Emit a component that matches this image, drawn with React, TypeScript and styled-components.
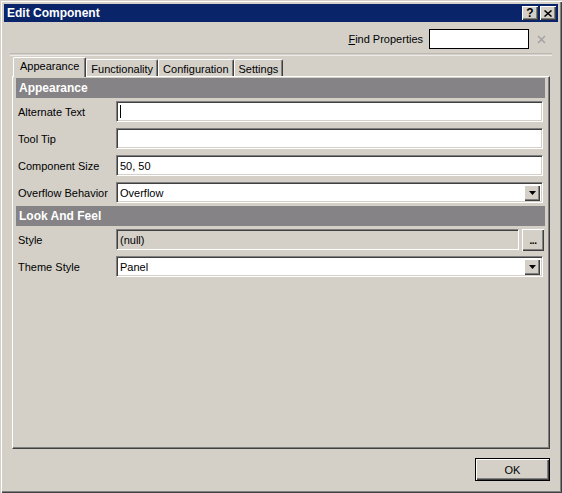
import React from 'react';
import styled, { createGlobalStyle } from 'styled-components';

const FACE = '#d4d0c8';
const SHADOW = '#808080';
const DARK = '#404040';

const GlobalStyle = createGlobalStyle`
  html, body {
    margin: 0;
    padding: 0;
    background: ${FACE};
  }
  body {
    font-family: 'Liberation Sans', Arial, sans-serif;
    font-size: 11px;
    color: #000;
  }
`;

const Window = styled.div`
  width: 562px;
  height: 493px;
  box-sizing: border-box;
  padding: 4px;
  background: ${FACE};
  display: flex;
  flex-direction: column;
  box-shadow: inset 1px 1px ${FACE}, inset 2px 2px #fff, inset -1px -1px ${DARK},
    inset -2px -2px ${SHADOW};
`;

const TitleBar = styled.div`
  height: 18px;
  background: #0a246a;
  display: flex;
  align-items: center;
  padding: 0 2px 0 2px;
  flex-shrink: 0;
`;

const Title = styled.div`
  flex: 1;
  color: #fff;
  font-weight: bold;
  font-size: 12px;
  padding-left: 1px;
`;

const raised = `
  background: ${FACE};
  box-shadow: inset 1px 1px #fff, inset -1px -1px ${DARK}, inset -2px -2px ${SHADOW};
`;

const CaptionButton = styled.div<{ $gap?: boolean }>`
  width: 16px;
  height: 14px;
  box-sizing: border-box;
  ${raised}
  display: flex;
  align-items: center;
  justify-content: center;
  margin-left: ${p => (p.$gap ? 2 : 0)}px;
  font-weight: bold;
  font-size: 12px;
  line-height: 1;
`;

const Body = styled.div`
  flex: 1;
  display: flex;
  flex-direction: column;
  padding: 0 8px 8px 8px;
`;

const FindRow = styled.div`
  margin-top: 7px;
  height: 20px;
  display: flex;
  align-items: center;
  justify-content: flex-end;
  gap: 6px;
  padding-right: 4px;
`;

const FindInput = styled.div`
  width: 100px;
  height: 20px;
  box-sizing: border-box;
  border: 1px solid #000;
  background: #fff;
`;

const ClearButton = styled.div`
  width: 9px;
  height: 9px;
  margin-left: 2px;
  display: flex;
`;

const Separator = styled.div`
  margin: 4px -2px 0 -2px;
  height: 1px;
  border-top: 1px solid #bdb9b1;
  border-bottom: 1px solid #ecebe7;
`;

const TabStrip = styled.div`
  margin-top: 1px;
  height: 19px;
  display: flex;
  align-items: flex-end;
  padding-left: 1px;
  position: relative;
  z-index: 1;
`;

const Tab = styled.div<{ $active?: boolean }>`
  box-sizing: border-box;
  height: ${p => (p.$active ? 20 : 17)}px;
  margin-bottom: ${p => (p.$active ? -1 : 0)}px;
  padding: ${p => (p.$active ? '2px 6px 0 6px' : '2px 4px 0 4px')};
  background: ${FACE};
  border-left: 1px solid #fff;
  border-top: 1px solid #fff;
  border-right: 1px solid ${DARK};
  box-shadow: inset -1px 0 ${SHADOW};
  border-radius: 2px 2px 0 0;
  display: flex;
  align-items: ${p => (p.$active ? 'flex-start' : 'center')};
  white-space: nowrap;
`;

const Panel = styled.div`
  flex: 1;
  box-sizing: border-box;
  border-left: 1px solid #fff;
  border-top: 1px solid #fff;
  border-right: 1px solid ${DARK};
  border-bottom: 1px solid ${DARK};
  box-shadow: inset -1px -1px ${SHADOW};
  padding: 1px 4px 0 3px;
`;

const Grid = styled.div`
  display: flex;
  flex-direction: column;
`;

const SectionHeader = styled.div`
  height: 20px;
  background: #858385;
  color: #fff;
  font-weight: bold;
  font-size: 12px;
  display: flex;
  align-items: center;
  padding-left: 3px;
`;

const Row = styled.div`
  height: 27px;
  display: flex;
  align-items: center;
`;

const Label = styled.div`
  width: 100px;
  padding-left: 2px;
  box-sizing: border-box;
  flex-shrink: 0;
  white-space: nowrap;
`;

const Field = styled.div<{ $disabled?: boolean }>`
  flex: 1;
  height: 21px;
  box-sizing: border-box;
  margin-right: ${p => (p.$disabled ? 0 : 2)}px;
  background: ${p => (p.$disabled ? FACE : '#fff')};
  border-top: 1px solid ${SHADOW};
  border-left: 1px solid ${SHADOW};
  border-bottom: 1px solid #fff;
  border-right: 1px solid #fff;
  box-shadow: inset 1px 1px ${DARK}, inset -1px -1px ${FACE};
  display: flex;
  align-items: center;
  padding: 0 2px 0 3px;
`;

const FieldText = styled.span`
  flex: 1;
  white-space: nowrap;
`;

const Caret = styled.span`
  width: 1px;
  height: 13px;
  background: #000;
`;

const DropButton = styled.div`
  width: 16px;
  height: 16px;
  box-sizing: border-box;
  ${raised}
  display: flex;
  align-items: center;
  justify-content: center;
`;

const EllipsisButton = styled.div`
  width: 22px;
  height: 22px;
  box-sizing: border-box;
  ${raised}
  margin: 0 1px 0 3px;
  display: flex;
  align-items: flex-end;
  justify-content: center;
  padding-bottom: 5px;
  font-weight: bold;
  font-size: 10px;
  line-height: 1;
  letter-spacing: -0.5px;
`;

const Footer = styled.div`
  margin-top: 9px;
  display: flex;
  justify-content: flex-end;
`;

const OkButton = styled.div`
  width: 75px;
  height: 23px;
  box-sizing: border-box;
  border: 1px solid #000;
  background: ${FACE};
  box-shadow: inset 1px 1px #fff, inset -1px -1px ${DARK}, inset -2px -2px ${SHADOW};
  display: flex;
  align-items: center;
  justify-content: center;
`;

const Arrow = () => (
  <svg width="7" height="4" viewBox="0 0 7 4">
    <path d="M0 0h7L3.5 4z" fill="#000" />
  </svg>
);

const ClearIcon = () => (
  <svg width="9" height="9" viewBox="0 0 9 9">
    <path d="M1 1l7 7M8 1L1 8" stroke="#a4a4a4" strokeWidth="1.6" />
  </svg>
);

const CloseGlyph = () => (
  <svg width="8" height="7" viewBox="0 0 8 7">
    <path d="M0.5 0.5l7 6M7.5 0.5l-7 6" stroke="#000" strokeWidth="1.5" />
  </svg>
);

const TextRow: React.FC<{ label: string; value?: string; caret?: boolean }> = props => (
  <Row>
    <Label>{props.label}</Label>
    <Field>
      {props.caret && <Caret />}
      <FieldText>{props.value}</FieldText>
    </Field>
  </Row>
);

const SelectRow: React.FC<{ label: string; value: string }> = props => (
  <Row>
    <Label>{props.label}</Label>
    <Field>
      <FieldText>{props.value}</FieldText>
      <DropButton>
        <Arrow />
      </DropButton>
    </Field>
  </Row>
);

export default function App() {
  return (
    <>
      <GlobalStyle />
      <Window>
        <TitleBar>
          <Title>Edit Component</Title>
          <CaptionButton>?</CaptionButton>
          <CaptionButton $gap>
            <CloseGlyph />
          </CaptionButton>
        </TitleBar>
        <Body>
          <FindRow>
            <span>
              <u>F</u>ind Properties
            </span>
            <FindInput />
            <ClearButton>
              <ClearIcon />
            </ClearButton>
          </FindRow>
          <Separator />
          <TabStrip>
            <Tab $active>Appearance</Tab>
            <Tab>Functionality</Tab>
            <Tab>Configuration</Tab>
            <Tab>Settings</Tab>
          </TabStrip>
          <Panel>
            <Grid>
              <SectionHeader>Appearance</SectionHeader>
              <TextRow label="Alternate Text" caret />
              <TextRow label="Tool Tip" />
              <TextRow label="Component Size" value="50, 50" />
              <SelectRow label="Overflow Behavior" value="Overflow" />
              <SectionHeader>Look And Feel</SectionHeader>
              <Row>
                <Label>Style</Label>
                <Field $disabled>
                  <FieldText>(null)</FieldText>
                </Field>
                <EllipsisButton>...</EllipsisButton>
              </Row>
              <SelectRow label="Theme Style" value="Panel" />
            </Grid>
          </Panel>
          <Footer>
            <OkButton>OK</OkButton>
          </Footer>
        </Body>
      </Window>
    </>
  );
}
